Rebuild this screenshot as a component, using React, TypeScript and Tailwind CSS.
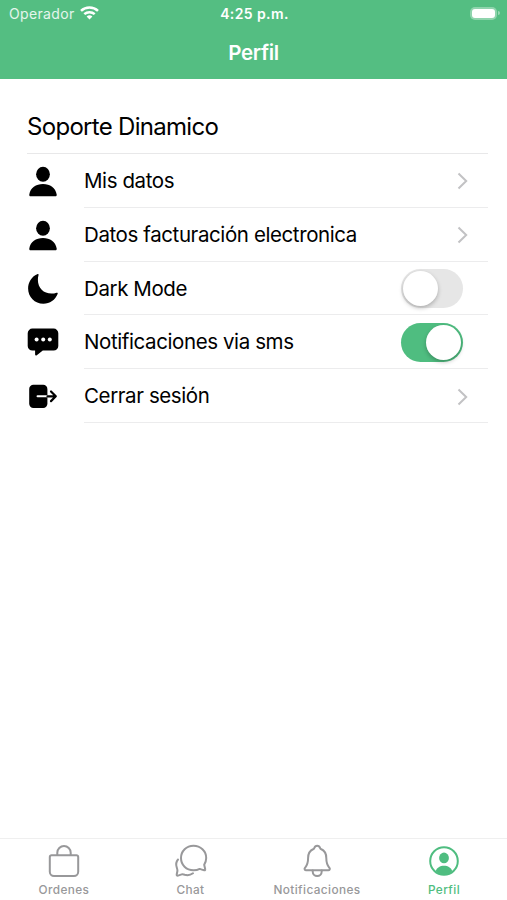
import React from 'react'

const PersonIcon = () => (
  <svg width="32" height="32" viewBox="0 0 32 32" fill="black">
    <ellipse cx="16" cy="8.2" rx="6.9" ry="7.5" />
    <path d="M3.6 30.3c-1 0-1.500-.7-1.300-1.800C3.300 21.800 9 17.900 16 17.900s12.700 3.900 13.700 10.600c.2 1.100-.3 1.800-1.300 1.800z" />
  </svg>
)

const MoonIcon = () => (
  <svg width="32" height="32" viewBox="0 0 32 32" fill="black">
    <path d="M10.200 1.200c.9-.5 1.600.1 1.300 1C11 3.700 10.900 5.300 10.900 7c0 7.900 5.700 13.600 13.600 13.600 1.800 0 3.400-.2 5-.8.9-.3 1.500.3 1.100 1.200C28.300 26.800 22.800 30.800 16.400 30.800 7.700 30.800 1.100 24.200 1.100 15.600c0-6.400 3.500-12 9.100-14.400z" />
  </svg>
)

const SmsIcon = () => (
  <svg width="32" height="32" viewBox="0 0 32 32">
    <path d="M5.400 1.500h21.200a4.700 4.700 0 0 1 4.700 4.700v12.700a4.700 4.700 0 0 1-4.700 4.700H15.800l-6 4.700c-.8.6-1.700.3-1.700-.7v-4H5.400a4.700 4.700 0 0 1-4.700-4.700V6.200a4.700 4.700 0 0 1 4.700-4.700z" fill="black" />
    <circle cx="9.600" cy="12.600" r="2" fill="white" />
    <circle cx="16.200" cy="12.600" r="2" fill="white" />
    <circle cx="22.800" cy="12.600" r="2" fill="white" />
  </svg>
)

const ExitIcon = () => (
  <svg width="32" height="32" viewBox="0 0 32 32" fill="none" strokeLinecap="round" strokeLinejoin="round">
    <rect x="2.200" y="3.700" width="18.200" height="23.200" rx="4.200" fill="black" />
    <path d="M10.500 15.300h9.700" stroke="white" strokeWidth="1.900" />
    <path d="M20.500 15.300h8M24 10.500l4.800 4.800-4.800 4.800" stroke="black" strokeWidth="2.200" />
  </svg>
)

const Chevron = () => (
  <svg width="12" height="18" viewBox="0 0 12 18" fill="none" stroke="#c2c2c4" strokeWidth="2">
    <path d="M1.500 1.500L9.200 9l-7.700 7.500" />
  </svg>
)

const Toggle = ({ on }: { on?: boolean }) => (
  <div className={`flex h-[39px] w-[62px] items-center rounded-full px-[2px] ${on ? 'justify-end bg-[#4fbd80]' : 'justify-start bg-[#e6e6e6]'}`}>
    <span className="h-[35px] w-[35px] rounded-full bg-white shadow-[0_2px_4px_rgba(0,0,0,0.25)]"></span>
  </div>
)

const rows = [
  { id: 1, label: 'Mis datos', icon: <PersonIcon />, end: <Chevron /> },
  { id: 2, label: 'Datos facturación electronica', icon: <PersonIcon />, end: <Chevron /> },
  { id: 3, label: 'Dark Mode', icon: <MoonIcon />, end: <Toggle /> },
  { id: 4, label: 'Notificaciones via sms', icon: <SmsIcon />, end: <Toggle on /> },
  { id: 5, label: 'Cerrar sesión', icon: <ExitIcon />, end: <Chevron /> },
]

const tabs = [
  {
    label: 'Ordenes',
    icon: (
      <>
        <path d="M5.500 12.300h25a1.700 1.700 0 0 1 1.700 1.700v14.700a4.200 4.200 0 0 1-4.200 4.200H8a4.200 4.200 0 0 1-4.200-4.200V14a1.700 1.700 0 0 1 1.700-1.700z" />
        <path d="M11.300 12V9.700a6.700 6.700 0 0 1 13.400 0V12" />
      </>
    ),
  },
  {
    label: 'Chat',
    icon: (
      <>
        <path d="M31.200 21.800c1-1.800 2-4.300 2-6.900C33.200 8 27.500 2.700 20.500 2.700S8 8 8 15s5.300 12.300 12.500 12.300c2.600 0 4.500-.5 6.200-1.400 1.500.5 3.300 1 4.500 1.300.8.2 1.200-.3 1-1z" />
        <path d="M5 16.500c-1.700 2-2.200 5-1.300 7.800.6 1.900.9 2.600.7 3.700l-.7 3.500c-.1.900.4 1.400 1.300 1.100l3.700-1.200c1-.3 1.800-.1 3 .3 3 .9 6 .2 8.300-1.400" />
      </>
    ),
  },
  {
    label: 'Notificaciones',
    icon: (
      <>
        <path d="M30.500 24.900c-1.900-2.300-3.200-3.500-3.200-9.900 0-5.900-3-8-5.400-9-.4-.2-.7-.5-.8-.9-.4-1.400-1.400-2.300-2.900-2.300s-2.500.9-2.900 2.300c-.1.400-.4.700-.8.900-2.400 1-5.400 3.100-5.400 9 0 6.400-1.300 7.600-3.200 9.900-.8 1-.1 2.400 1.200 2.400h22.200c1.300 0 2-1.400 1.200-2.400z" />
        <path d="M22.700 27.500v1a4.500 4.500 0 0 1-9 0v-1" />
      </>
    ),
  },
  {
    label: 'Perfil',
    active: true,
    icon: (
      <>
        <circle cx="18" cy="18" r="13.800" />
        <path d="M9.700 28.300C10.700 24.700 14.100 22.800 18 22.800s7.300 1.900 8.300 5.500c-4.700 4.300-11.900 4.300-16.600 0z" fill="currentColor" stroke="none" />
        <ellipse cx="18" cy="14.900" rx="4.900" ry="5.300" fill="currentColor" stroke="none" />
      </>
    ),
  },
]

const App = () => {
  return (
    <div className="flex h-[900px] w-full flex-col overflow-hidden bg-white font-['Inter',sans-serif] text-black">
      <header className="h-[79px] bg-[#54be82] text-white">
        <div className="grid h-[26px] grid-cols-3 items-center pr-[7px] pl-[9px]">
          <div className="flex items-center gap-[5px] text-[14px] text-white/85">
            <span className="tracking-[0.35px]">Operador</span>
            <svg width="19" height="14" viewBox="0 0 19 14" fill="none" stroke="white" strokeWidth="2.500">
              <path d="M1 4.800a12.300 12.300 0 0 1 17 0M4.300 8.200a7.700 7.700 0 0 1 10.400 0" />
              <path d="M9.500 13.500L6.600 10.600a4.300 4.300 0 0 1 5.800 0z" fill="white" stroke="none" />
            </svg>
          </div>
          <span className="text-center text-[14px] font-semibold tracking-[0.4px]">4:25 p.m.</span>
          <div className="flex items-center justify-end gap-px">
            <div className="rounded-[5px] bg-white/35 p-[2px]">
              <div className="h-[9px] w-[23px] rounded-[3px] bg-white"></div>
            </div>
            <span className="h-[4px] w-[2px] rounded-r-full bg-white/40"></span>
          </div>
        </div>
        <h1 className="mt-[11px] text-center text-[20.500px] leading-[31px] font-semibold tracking-[-0.3px]">Perfil</h1>
      </header>

      <main className="flex-1 pt-[30px] pr-[19px] pl-[27px]">
        <h2 className="h-[45px] border-b border-[#e8e8e9] text-[24px] leading-[36px] tracking-[-0.7px]">Soporte Dinamico</h2>
        {rows.map((row) => (
          <div key={row.id} className="flex h-[53.800px] items-center">
            <div className="w-[57px] pt-[2px]">{row.icon}</div>
            <div className="flex h-full flex-1 items-center justify-between border-b border-[#ececed] pt-[2px] pr-[25px]">
              <span className="text-[20.500px] tracking-[-0.4px] whitespace-nowrap">{row.label}</span>
              <div className={row.end.type === Chevron ? '-mr-[6px]' : ''}>{row.end}</div>
            </div>
          </div>
        ))}
      </main>

      <nav className="grid h-[62px] grid-cols-[128px_125px_128px_126px] border-t border-[#efefef]">
        {tabs.map((tab) => (
          <div key={tab.label} className={`flex flex-col items-center pt-[4px] ${tab.active ? 'text-[#4fbd80]' : 'text-[#98989a]'}`}>
            <svg width="36" height="36" viewBox="0 0 36 36" fill="none" stroke="currentColor" strokeWidth="2" strokeLinecap="round" strokeLinejoin="round">
              {tab.icon}
            </svg>
            <span className="mt-[3px] text-[11.800px] leading-[17px] font-medium tracking-[0.4px]">{tab.label}</span>
          </div>
        ))}
      </nav>
    </div>
  )
}

export default App
